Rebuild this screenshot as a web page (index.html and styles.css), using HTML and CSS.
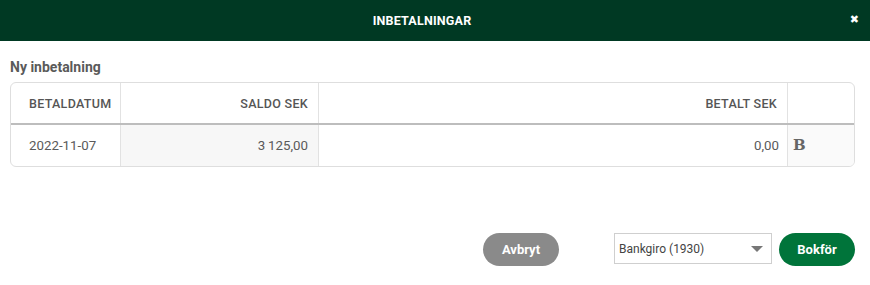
FILE: index.html
```
<!DOCTYPE html>
<html>
<head>
<meta charset="utf-8">
<link rel="stylesheet" href="styles.css">
</head>
<body>
<div class="modal">
  <div class="header">
    <span class="title">INBETALNINGAR</span>
    <span class="close">&#x2716;</span>
  </div>
  <div class="content">
    <div class="subtitle">Ny inbetalning</div>
    <div class="table">
      <div class="row head">
        <div class="cell c1">BETALDATUM</div>
        <div class="cell c2 right">SALDO SEK</div>
        <div class="cell c3 right">BETALT SEK</div>
        <div class="cell c4"></div>
      </div>
      <div class="row body">
        <div class="cell c1">2022-11-07</div>
        <div class="cell c2 right grey">3&#x2009;125,00</div>
        <div class="cell c3 right">0,00</div>
        <div class="cell c4 light"><span class="b">B</span></div>
      </div>
    </div>
  </div>
  <div class="footer">
    <button class="btn cancel">Avbryt</button>
    <div class="select">
      <span>Bankgiro (1930)</span>
      <span class="caret"></span>
    </div>
    <button class="btn primary">Bokför</button>
  </div>
</div>
</body>
</html>
```
FILE: styles.css
```
html, body { margin: 0; padding: 0; background: #fff; }
body { font-family: Roboto, "Noto Sans", sans-serif; color: #444; width: 870px; height: 285px; overflow: hidden; }
.header { height: 41px; background: #003923; display: flex; align-items: center; justify-content: center; position: relative; padding-right: 26px; }
.title { color: #fff; font-weight: 700; font-size: 12.5px; letter-spacing: 0.2px; }
.close { position: absolute; right: 11px; top: 13px; color: #fff; font-size: 11px; font-weight: 700; font-family: "DejaVu Sans", sans-serif; }
.content { padding: 18px 15px 0 10px; }
.subtitle { font-size: 14px; font-weight: 700; color: #5a5a5a; line-height: 17px; margin-bottom: 6px; }
.table { border: 1px solid #dedede; border-radius: 6px; overflow: hidden; }
.row { display: flex; }
.row.head { height: 40px; border-bottom: 2px solid #bdbdbd; }
.row.body { height: 41px; }
.cell { display: flex; align-items: center; padding: 0 14px; box-sizing: border-box; border-right: 1px solid #e2e2e2; }
.head .cell { font-weight: 500; color: #555; font-size: 12.5px; letter-spacing: 0.3px; }
.body .cell { color: #5a5a5a; font-size: 13.3px; font-weight: 400; }
.c1 { width: 110px; padding-left: 18px; }
.c2 { width: 198px; }
.c3 { width: 469px; }
.c4 { flex: 1; border-right: none; padding-left: 5px; }
.right { justify-content: flex-end; padding-right: 10px; }
.body .c3 { padding-right: 8px; }
.grey { background: #f7f7f7; }
.light { background: #fafafa; }
.b { font-family: "DejaVu Serif", "Liberation Serif", serif; font-weight: 700; font-size: 15px; color: #666; margin-top: -2px; }
.footer { display: flex; justify-content: flex-end; align-items: center; padding: 66px 15px 0 0; }
.btn { border: none; height: 33px; width: 76px; border-radius: 17px; color: #fff; font-family: Roboto, sans-serif; font-weight: 700; font-size: 13px; padding: 0; }
.cancel { background: #8a8a8a; margin-right: 55px; }
.primary { background: #00743a; margin-left: 7px; }
.select { width: 158px; height: 31px; box-sizing: border-box; border: 1px solid #cfcfcf; display: flex; align-items: center; justify-content: space-between; padding: 0 8px 0 4px; font-size: 12px; color: #444; margin-top: -2px; }
.caret { width: 0; height: 0; border-left: 6px solid transparent; border-right: 6px solid transparent; border-top: 6px solid #777; }
```
